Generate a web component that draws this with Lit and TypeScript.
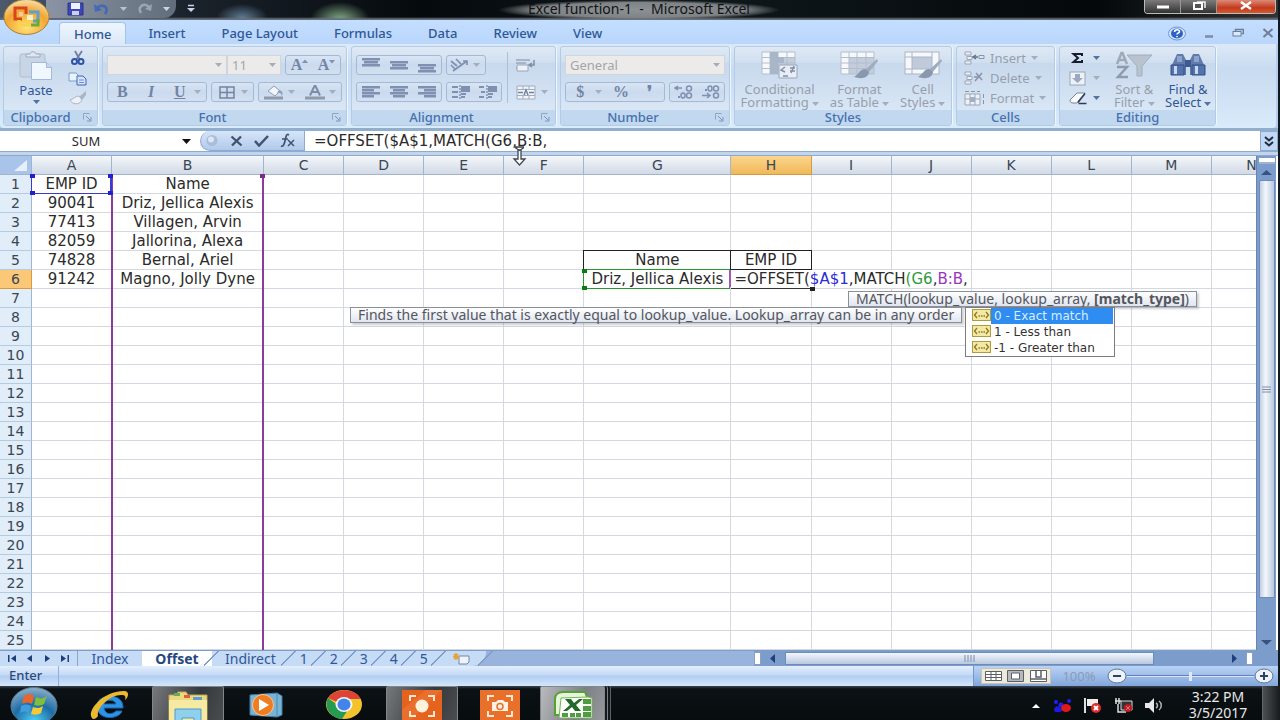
import { LitElement, html, svg, css, nothing } from "lit";
import { customElement } from "lit/decorators.js";
import { classMap } from "lit/directives/class-map.js";

const icon = (w: number, h: number, body: unknown, cls = "") =>
  html`<svg class=${cls} width=${w} height=${h} viewBox="0 0 ${w} ${h}" aria-hidden="true">${body}</svg>`;

const caret = (color = "#a3adbd") =>
  icon(7, 4, svg`<path d="M0 0h7L3.5 4z" fill=${color} />`, "caret");

const bars = (rows: number[][]) =>
  icon(18, 16, svg`${rows.map(([x, y, w]) => svg`<rect x=${x} y=${y} width=${w} height="2.500" fill="#8090b1"/>`)}`);

const COLS = ["A", "B", "C", "D", "E", "F", "G", "H", "I", "J", "K", "L", "M", "N"];
const WIDE: Record<string, string> = { B: "c-b", G: "c-g" };
const CELLS: Record<string, string> = {
  A1: "EMP ID", B1: "Name",
  A2: "90041", B2: "Driz, Jellica Alexis",
  A3: "77413", B3: "Villagen, Arvin",
  A4: "82059", B4: "Jallorina, Alexa",
  A5: "74828", B5: "Bernal, Ariel",
  A6: "91242", B6: "Magno, Jolly Dyne",
  G5: "Name", H5: "EMP ID", G6: "Driz, Jellica Alexis",
};

const launcher = icon(9, 9, svg`<path d="M.5 6.5v-6h6" fill="none" stroke="#8fa5c6"/><path d="M3 3l4 4M8 4v4H4" fill="none" stroke="#7b93b8"/>`, "launcher");

const gridIcon = (extra: unknown) => icon(38, 28, svg`
  <rect x="1" y="1" width="33" height="22" fill="#f6f8fb"/>
  <path d="M9 6.500h25V23H9z" fill="#c3cddc"/>
  <path d="M1 1h33v22H1zM9 1v22M17 1v22M26 1v22M1 6.500h33M1 12h33M1 17.500h33" fill="none" stroke="#b3becd"/>
  ${extra}`);

const brush = svg`<path d="M37 8L25 19l3 3L38 10z" fill="#9eacbf"/><path d="M25 18c-5 0-6 5-11 8 6 2 14 2 15-5z" fill="#8998ae"/>`;

@customElement("excel-ribbon")
class ExcelRibbon extends LitElement {
  static styles = css`
    :host { display: block; color: #3e6aaa; font: 13px/16px "Noto Sans", sans-serif; }
    button { font: inherit; color: inherit; background: none; border: 0; padding: 0; margin: 0; display: flex; align-items: center; justify-content: center; }
    svg { display: block; flex: none; }
    .tabs { display: flex; align-items: end; height: 24px; padding-left: 59px; padding-right: 4px; background: linear-gradient(#c3deff, #b9d6fb); }
    .tab { height: 22px; padding: 0 14px; color: #2f5796; font-weight: 500; }
    .tab + .tab { margin-left: 8px; }
    .tab.on { background: linear-gradient(#eef6ff, #dbe8f8); border: 1px solid #a5c3e8; border-bottom: 0; border-radius: 4px 4px 0 0; }
    .winctl { display: flex; align-items: center; margin-left: auto; height: 22px; gap: 18px; }
    .ribbon { display: flex; gap: 4px; padding: 2px 3px; height: 84px; box-sizing: border-box; margin-right: 2px; background: linear-gradient(#dce9f8, #c8dbf0 30%, #d3e4f6 75%, #d9ecfb); border-radius: 0 0 4px 4px; }
    .edge { height: 3px; background: #92aecd; }
    .group { display: flex; flex-direction: column; box-sizing: border-box; border: 1px solid #b3cbe6; border-radius: 3px; background: linear-gradient(#dfe9f5, #d0dff0 20%, #c8d9ed 21%, #d8e6f5 80%); box-shadow: 1px 0 0 #eef6ff; overflow: hidden; }
    .label { position: relative; height: 15px; line-height: 15px; text-align: center; background: #c1d8ef; color: #4670ae; font-weight: 500; }
    .label.has { padding-right: 24px; }
    .clip .label { padding-right: 20px; }
    .launcher { position: absolute; right: 5px; top: 3px; }
    .content { flex: 1; display: flex; min-height: 0; }
    .rows { display: flex; flex-direction: column; gap: 7px; padding: 8px 4px 0; flex: 1; }
    .row { display: flex; gap: 4px; height: 20px; }
    .box { display: flex; align-items: center; justify-content: space-around; box-sizing: border-box; height: 20px; border: 1px solid #a3bad6; border-radius: 3px; background: linear-gradient(#d9e5f4, #cbdaee 50%, #d2e0f1); color: #7284a4; }
    .box button { flex: 1; }
    .box .caret { margin-right: 5px; }
    .serif { font: bold 16px/18px "Liberation Serif", serif; color: #7284a4; }
    .combo { display: flex; align-items: center; box-sizing: border-box; height: 20px; border: 1px solid #cfd5de; background: #ecebea; padding-right: 4px; color: #a3a5a8; }
    .combo input, .combo select { appearance: none; flex: 1; min-width: 0; width: 10px; border: 0; background: none; color: #a3a5a8; font: inherit; padding: 0 4px; opacity: 1; }
    .w-name { width: 120px; } .w-size { width: 54px; margin-left: -4px; } .w-56 { width: 56px; } .w-100 { width: 100px; } .w-43 { width: 43px; } .w-84 { width: 84px; } .w-86 { width: 86px; } .w-40 { width: 40px; } .w-160 { width: 160px; }
    .clip { width: 95px; } .font { width: 245px; } .align { width: 205px; } .num { width: 170px; } .styles { width: 218px; } .cells { width: 99px; } .edit { width: 157px; }
    .paste { flex-direction: column; justify-content: start; width: 64px; padding-top: 4px; gap: 2px; color: #2f5796; }
    .stack { display: flex; flex-direction: column; justify-content: space-between; padding: 3px 0 5px; align-items: center; }
    .vline { width: 1px; background: #a9bfdb; margin: 5px 0 7px 1px; }
    .merge { padding: 8px 0 0 8px; display: flex; flex-direction: column; gap: 7px; width: 40px; }
    .merge button { height: 20px; justify-content: start; gap: 5px; }
    .big { flex-direction: column; justify-content: start; line-height: 13px; padding-top: 4px; gap: 4px; color: #979fac; }
    .big .txt { display: block; text-align: center; white-space: nowrap; }
    .big svg.caret { display: inline-block; vertical-align: middle; margin-left: 3px; }
    .big.live { color: #2f5796; }
    .bigs { justify-content: space-around; }
    .cellrow { gap: 5px; color: #979fac; height: 20px; justify-content: start; }
    .cellrows { display: flex; flex-direction: column; padding: 1px 0 0 7px; }
    .small { display: flex; flex-direction: column; padding: 1px 0 0 9px; width: 40px; }
    .small button { height: 20px; gap: 6px; justify-content: start; }
  `;

  render() {
    const g = "#8090b1";
    return html`
      <nav class="tabs">
        ${["Home", "Insert", "Page Layout", "Formulas", "Data", "Review", "View"].map(
          (t, i) => html`<button class=${classMap({ tab: true, on: i === 0 })}>${t}</button>`)}
        <div class="winctl">
          <button aria-label="Help">${icon(18, 15, svg`<ellipse cx="9" cy="7.500" rx="8.500" ry="6.500" fill="#d5e6fb" stroke="#6d95d8"/><ellipse cx="9" cy="7.500" rx="6" ry="5" fill="#2c62c6"/><path d="M6.500 6c0-3 5-3 5-.5C11.500 7 9 7 9 8.500M9 10v1.300" fill="none" stroke="#fff" stroke-width="1.600"/>`)}</button>
          <button aria-label="Minimize workbook">${icon(10, 12, svg`<path d="M1 9.500h8" stroke="#7c8da6" stroke-width="2.500"/>`)}</button>
          <button aria-label="Restore workbook">${icon(12, 12, svg`<path d="M3.500 4V2.500h8v4H9.500" fill="none" stroke="#6c7e98" stroke-width="1.500"/><rect x="1" y="4.500" width="8" height="4.500" fill="#dce9fb" stroke="#6c7e98"/>`)}</button>
          <button aria-label="Close workbook">${icon(12, 12, svg`<path d="M1.500 2l9 8M10.500 2l-9 8" stroke="#6f7d93" stroke-width="2"/>`)}</button>
        </div>
      </nav>
      <div class="ribbon">
        <section class="group clip">
          <div class="content">
            <button class="paste">
              ${icon(34, 29, svg`<rect x="1" y="3" width="25" height="23" rx="2" fill="#c9d4e4" stroke="#b0bdd0"/><path d="M7 6V3h4c0-3 6-3 6 0h4v3z" fill="#dfe6ef" stroke="#9dabc0"/><path d="M12.500 11.500h15l5 5v12h-20z" fill="#f1f7ff" stroke="#a2b9dd"/><path d="M27.500 11.500v5h5" fill="#c9daf3" stroke="#a2b9dd"/>`)}
              <span>Paste</span>${caret("#4d70a8")}
            </button>
            <div class="stack">
              <button aria-label="Cut">${icon(18, 16, svg`<path d="M6 1l5 9M13 1L7 10" stroke="#6c7fa2" stroke-width="1.800"/><circle cx="5.500" cy="11.500" r="2.500" fill="none" stroke="#2e54a8" stroke-width="2"/><circle cx="12" cy="11.500" r="2.500" fill="none" stroke="#2e54a8" stroke-width="2"/>`)}</button>
              <button aria-label="Copy">${icon(20, 14, svg`<path d="M1 1h7l2 2v6H1z" fill="#e9f2ff" stroke="#7b9bd0"/><path d="M9 4h6l3 3v6H9z" fill="#d4e3fb" stroke="#3e66b2"/><path d="M11 8h5M11 10.500h5" stroke="#6e93d2"/>`)}</button>
              <button aria-label="Format Painter">${icon(18, 14, svg`<path d="M17 0l-7 6 3 3 4-5z" fill="#a9b4c5"/><path d="M10 5c-4 0-5 3-9 4 2 4 9 6 12 0z" fill="#eef1f5" stroke="#a9b4c5"/>`)}</button>
            </div>
          </div>
          <div class="label has">Clipboard${launcher}</div>
        </section>
        <section class="group font">
          <div class="rows">
            <div class="row">
              <label class="combo w-name"><input aria-label="Font name" disabled />${caret()}</label>
              <label class="combo w-size"><input aria-label="Font size" value="11" disabled />${caret()}</label>
              <div class="box w-56">
                <button aria-label="Grow Font" class="serif">A${icon(6, 14, svg`<path d="M0 5l3-3.500L6 5z" fill=${g}/>`)}</button>
                <button aria-label="Shrink Font" class="serif">A${icon(6, 14, svg`<path d="M0 2h6L3 5.500z" fill=${g}/>`)}</button>
              </div>
            </div>
            <div class="row">
              <div class="box w-100"><button class="serif">B</button><button class="serif"><i>I</i></button><button class="serif"><u>U</u></button>${caret()}</div>
              <div class="box w-43"><button aria-label="Borders">${icon(16, 13, svg`<path d="M1 1h14v11H1zM8 1v11M1 6.500h14" fill="none" stroke="#74849f" stroke-width="1.500"/>`)}</button>${caret()}</div>
              <div class="box w-84">
                <button aria-label="Fill Color">${icon(20, 15, svg`<path d="M4 6l6-5 6 5-5 5z" fill="#f2f5f9" stroke="#8f9db5"/><path d="M15 5c4 1 4 3 3 6-1-3-2-4-5-3z" fill="#8f9db5"/><path d="M0 11.500h19v3H0z" fill="#909aa9"/>`)}</button>${caret()}
                <button aria-label="Font Color">${icon(20, 15, svg`<path d="M5 10.500L9.500 1h1L15 10.500M7 7h6.500" fill="none" stroke="#7d8ca8" stroke-width="2"/><path d="M0 11.500h20v3H0z" fill="#909aa9"/>`)}</button>${caret()}
              </div>
            </div>
          </div>
          <div class="label has">Font${launcher}</div>
        </section>
        <section class="group align">
          <div class="content">
            <div class="rows">
              <div class="row">
                <div class="box w-86">
                  <button aria-label="Top Align">${bars([[0, 1, 18], [2, 4, 14], [0, 7, 18]])}</button>
                  <button aria-label="Middle Align">${bars([[0, 4, 18], [2, 7, 14], [0, 10, 18]])}</button>
                  <button aria-label="Bottom Align">${bars([[0, 7, 18], [2, 10, 14], [0, 13, 18]])}</button>
                </div>
                <div class="box w-40"><button aria-label="Orientation">${icon(20, 16, svg`<path d="M1 4l6 5M1 8l4 4M6 2l5 5M3 14L17 4M13 4h4v4" fill="none" stroke=${g} stroke-width="1.700"/>`)}</button>${caret()}</div>
              </div>
              <div class="row">
                <div class="box w-86">
                  <button aria-label="Align Left">${bars([[0, 2, 18], [0, 5, 12], [0, 8, 18], [0, 11, 12]])}</button>
                  <button aria-label="Center">${bars([[0, 2, 18], [3, 5, 12], [0, 8, 18], [3, 11, 12]])}</button>
                  <button aria-label="Align Right">${bars([[0, 2, 18], [6, 5, 12], [0, 8, 18], [6, 11, 12]])}</button>
                </div>
                <div class="box w-56">
                  <button aria-label="Decrease Indent">${icon(18, 16, svg`<path d="M0 3h6M0 8h6M0 13h6" stroke=${g} stroke-width="2"/><path d="M9 2h9v6H9zM9 9h5v2H9zM9 12h4v2H9z" fill=${g}/><path d="M8 1v14" stroke="#5f7194" stroke-dasharray="2 1"/>`)}</button>
                  <button aria-label="Increase Indent">${icon(18, 16, svg`<path d="M0 3h5M2 8h4M0 13h5" stroke=${g} stroke-width="2"/><path d="M9 2h9v6H9zM9 9h5v2H9zM9 12h4v2H9z" fill=${g}/><path d="M8 1v14" stroke="#5f7194" stroke-dasharray="2 1"/>`)}</button>
                </div>
              </div>
            </div>
            <div class="vline"></div>
            <div class="merge">
              <button aria-label="Wrap Text">${icon(20, 15, svg`<path d="M0 2h14M0 5h10M0 10h8" stroke="#9aa6ba" stroke-width="1.500"/><path d="M1 7h11v6H1z" fill="#eef2f7" stroke="#9aa6ba"/><path d="M18 2v5h-4M16 5l-3 2 3 2" fill="none" stroke="#7f8da5" stroke-width="1.500"/>`)}</button>
              <button aria-label="Merge and Center">${icon(20, 15, svg`<path d="M1 1h18v13H1zM1 4.500h18M1 10.500h18M7 1v3M13 1v3M7 11v3M13 11v3" fill="#f0f3f8" stroke="#a0acbf"/><path d="M2 7.500h5M18 7.500h-5M8 10l2-5 2 5" fill="none" stroke="#74849f" stroke-width="1.500"/>`)}${caret()}</button>
            </div>
          </div>
          <div class="label has">Alignment${launcher}</div>
        </section>
        <section class="group num">
          <div class="rows">
            <div class="row"><label class="combo w-160"><select aria-label="Number Format" disabled><option>General</option></select>${caret()}</label></div>
            <div class="row">
              <div class="box w-100"><button class="serif">$</button>${caret()}<button class="serif">%</button><button class="serif">❜</button></div>
              <div class="box w-56">
                <button aria-label="Increase Decimal">${icon(20, 14, svg`<path d="M8 3H1M4 1L1 3l3 2" fill="none" stroke=${g} stroke-width="1.500"/><g fill="none" stroke=${g} stroke-width="1.500"><ellipse cx="15" cy="3.500" rx="2.500" ry="2.500"/><ellipse cx="9" cy="10.500" rx="2" ry="2.500"/><ellipse cx="15" cy="10.500" rx="2.500" ry="2.500"/></g><path d="M4 11h2v2H4z" fill=${g}/>`)}</button>
                <button aria-label="Decrease Decimal">${icon(20, 14, svg`<path d="M1 10.500h8M6 8l3 2.500L6 13" fill="none" stroke=${g} stroke-width="1.500"/><g fill="none" stroke=${g} stroke-width="1.500"><ellipse cx="9" cy="3.500" rx="2" ry="2.500"/><ellipse cx="15" cy="3.500" rx="2.500" ry="2.500"/><ellipse cx="15" cy="10.500" rx="2.500" ry="2.500"/></g><path d="M4 4h2v2H4z" fill=${g}/>`)}</button>
              </div>
            </div>
          </div>
          <div class="label has">Number${launcher}</div>
        </section>
        <section class="group styles">
          <div class="content bigs">
            <button class="big">${gridIcon(svg`<path d="M9 1h8v22H9zM17 6h6v6h-6z" fill="#a9b5c9"/><path d="M18 14h18v13H18z" fill="#e9eef5" stroke="#9aa7bb"/><path d="M24 16l-4 3 4 2M27 25h-5M29 17h5M29 20h5M33 15l-3 7" fill="none" stroke="#8090a8" stroke-width="1.500"/>`)}<span class="txt">Conditional<br />Formatting${caret()}</span></button>
            <button class="big">${gridIcon(brush)}<span class="txt">Format<br />as Table${caret()}</span></button>
            <button class="big">${icon(38, 28, svg`<rect x="1" y="1" width="34" height="22" fill="#f6f8fb" stroke="#aab6c8"/><path d="M8 6h20v12H8z" fill="#bfcadb" stroke="#aab6c8"/><path d="M8 1v5M28 1v5M1 6h7M1 18h7M8 18v5" stroke="#aab6c8"/>${brush}`)}<span class="txt">Cell<br />Styles${caret()}</span></button>
          </div>
          <div class="label">Styles</div>
        </section>
        <section class="group cells">
          <div class="content cellrows">
            <button class="cellrow">${icon(21, 14, svg`<path d="M1 1h6v3H1zM1 10h6v3H1zM3 5.500h5v3H3z" fill="#eef2f7" stroke="#9aa6ba"/><path d="M10 6h4M12 4l-3 2 3 2" fill="none" stroke="#66758f" stroke-width="1.500"/><path d="M15 4.500h5v3h-5z" fill="#dfe6ef" stroke="#8794ab"/>`)}Insert ${caret()}</button>
            <button class="cellrow">${icon(21, 14, svg`<path d="M1 1h6v3H1zM1 10h6v3H1zM3 5.500h5v3H3z" fill="#eef2f7" stroke="#9aa6ba"/><path d="M10 6h5M11 10l7-8M12 2l6 7" fill="none" stroke="#8794ab" stroke-width="1.500"/>`)}Delete ${caret()}</button>
            <button class="cellrow">${icon(21, 15, svg`<path d="M1 3h15v11H1zM6 3v11M11 3v11M1 8h15" fill="#eef2f7" stroke="#9aa6ba"/><path d="M1 .5h15M19.500 3v11" stroke="#8794ab" stroke-dasharray="4 2"/><path d="M6 6h5v5H6z" fill="#a3b0c4"/>`)}Format ${caret()}</button>
          </div>
          <div class="label">Cells</div>
        </section>
        <section class="group edit">
          <div class="content">
            <div class="small">
              <button aria-label="Sum">${icon(18, 14, svg`<path d="M13 5V3H4.500L9 7l-4.500 4H13V9" fill="none" stroke="#151d2e" stroke-width="2"/>`)}${caret("#5672a0")}</button>
              <button aria-label="Fill">${icon(18, 15, svg`<rect x="1" y="1" width="15" height="13" fill="#eef2f7" stroke="#9aa6ba"/><path d="M6 3h5v4h3l-5.500 5L3 7h3z" fill="#9ba8bd"/>`)}${caret()}</button>
              <button aria-label="Clear">${icon(18, 14, svg`<path d="M1 9l7-7h8l-6 7-2 3H4c-2 0-3-1-3-3z" fill="#fbfcff" stroke="#74859f"/><path d="M9.500 12.500h8" stroke="#2e3c58" stroke-width="1.500"/><path d="M9 11.500l7-9" stroke="#2e3c58" stroke-width="1.500"/>`)}${caret("#5672a0")}</button>
            </div>
            <button class="big w-56">${icon(38, 28, svg`<path d="M12 4h25L27 15v10h-5V15z" fill="#b9c3d0" stroke="#a2adbd"/><path d="M2 13L6.500 2h1L12 13M4 9h6" fill="none" stroke="#a1a9b7" stroke-width="2.500"/><path d="M2 16h10L3 26h10" fill="none" stroke="#8f9aae" stroke-width="2.500"/>`)}<span class="txt">Sort &amp;<br />Filter${caret()}</span></button>
            <button class="big live w-56">${icon(38, 28, svg`<path d="M8 3h6l3 6v15H3V14z" fill="#617bab"/><path d="M30 3h-6l-3 6v15h14V14z" fill="#617bab"/><path d="M16 9h6v7h-6z" fill="#3d5a92"/><path d="M2 14h13v10H2zM23 14h13v10H23z" fill="#5472ab" stroke="#334f86"/><path d="M5 15h3v8H5zM26 15h3v8h-3z" fill="#c9d8f2"/><path d="M8 5h5v6H8zM25 5h5v6h-5z" fill="#8ba3cd"/>`)}<span class="txt">Find &amp;<br />Select${caret("#5672a0")}</span></button>
          </div>
          <div class="label">Editing</div>
        </section>
      </div>
      <div class="edge"></div>
    `;
  }
}

@customElement("excel-sheet")
class ExcelSheet extends LitElement {
  static styles = css`
    :host { display: flex; min-height: 0; position: relative; background: #fff; font: 15px/18px "DejaVu Sans", sans-serif; color: #2b2b2b; }
    .view { flex: 1; min-width: 0; overflow: hidden; position: relative; }
    table { table-layout: fixed; border-collapse: separate; border-spacing: 0; width: 1292px; }
    col.c { width: 80px; } col.c-b { width: 152px; } col.c-g { width: 147px; } col.rh { width: 32px; }
    th, td { height: 19px; box-sizing: border-box; padding: 0; border-right: 1px solid #d3d8e2; border-bottom: 1px solid #d3d8e2; text-align: center; white-space: nowrap; position: relative; font-weight: normal; }
    td { line-height: 18px; }
    th { font-size: 14px; line-height: 16px; color: #3a4654; border-color: #9eb6ce; background: linear-gradient(#f5f8fc, #dfe5ee 60%, #d3dae6); }
    tbody th { background: #e1edf8; border-bottom-color: #b5cbe0; }
    th.hot { background: linear-gradient(#fbd58c, #f0b95a); border-color: #d99a3c; }
    tbody th.hot { background: #fbc878; }
    th.corner { background: #a9c4e9; }
    .tri { position: absolute; right: 4px; bottom: 3px; }
    .frame { position: absolute; inset: -1px -1px -1px -1px; border: 1px solid #222; z-index: 1; }
    .blue { position: absolute; inset: 0 -1px -1px -1px; border: 2px solid #3a3ad0; border-top: 0; border-left-width: 1px; border-bottom-width: 1px; z-index: 2; }
    .green { position: absolute; inset: -1px 0 -1px -1px; border: 1px solid #2c9432; z-index: 2; }
    .k { position: absolute; width: 5px; height: 4px; background: currentColor; }
    .blue { color: #2020d0; } .green { color: #087d10; }
    .tl { left: -2px; top: -1px; } .tr { right: -3px; top: -1px; } .bl { left: -2px; bottom: -2px; } .br { right: -3px; bottom: -2px; }
    .purple { position: absolute; top: 0; left: -1px; right: -1px; height: 476px; border: 2px solid #8c3a9c; border-width: 0 2px; color: #7c2a8c; z-index: 1; }
    .under { position: absolute; inset: auto -1px -1px 0; height: 1px; background: #333; z-index: 4; color: #222; }
    .edit { position: absolute; left: 0; top: 0; height: 18px; padding-left: 3px; background: #fff; z-index: 3; text-align: left; }
    .edit::before { content: ""; position: absolute; left: -2px; top: 0; height: 17px; width: 2px; background: #a25bb0; }
    .r { color: #2c2cd8; } .g { color: #2e9a3a; } .p { color: #9a35c0; }
    .tip { position: absolute; z-index: 4; box-sizing: border-box; height: 16px; padding: 0 7px; font: 14px/14px "Noto Sans", sans-serif; color: #54565c; white-space: nowrap; border: 1px solid #8b8f98; background: linear-gradient(#fff, #dfe5f1); box-shadow: 2px 2px 2px #8886; }
    .sig { left: 848px; top: 135px; }
    .desc { left: 350px; top: 151px; }
    .list { position: absolute; z-index: 5; left: 965px; top: 151px; width: 150px; box-sizing: border-box; margin: 0; padding: 0 1px; list-style: none; background: #fff; border: 1px solid #7b7d82; font: 12px/16px "DejaVu Sans", sans-serif; color: #333; }
    .list li { display: flex; height: 16px; padding-left: 5px; }
    .list span { flex: 1; padding-left: 3px; }
    .list svg { flex: none; margin-top: 1px; }
    .list .sel span { background: #2f8cf0; color: #d8edff; }
    .vbar { width: 20px; display: flex; flex-direction: column; align-items: center; margin-right: 2px; background: #7c9dcc; border-left: 1px solid #6585b5; box-sizing: border-box; }
    .split { width: 16px; height: 4px; margin-top: 2px; background: #fff; border-bottom: 2px solid #9fb4d2; }
    .up, .down { border: 0; background: none; padding: 0; height: 16px; display: flex; align-items: center; }
    .thumb { width: 14px; flex: 418; background: linear-gradient(90deg, #c3cfe2, #f3f7fc 40%, #b9c8df); border: 1px solid #6e8cb9; display: flex; align-items: center; justify-content: center; border-radius: 1px; }
    .track { flex: 36; }
  `;

  private overlay(id: string) {
    const knobs = (...k: string[]) => k.map((c) => html`<i class="k ${c}"></i>`);
    if (id === "A1") return html`<div class="blue">${knobs("tl", "tr", "bl", "br")}</div>`;
    if (id === "B1") return html`<div class="purple">${knobs("tr")}</div>`;
    if (id === "G5" || id === "H5") return html`<div class="frame"></div>`;
    if (id === "G6") return html`<div class="green">${knobs("tl", "bl")}</div>`;
    if (id === "H6")
      return html`<div class="edit">=OFFSET(<span class="r">$A$1</span>,MATCH<span class="g">(G6</span>,<span class="p">B:B</span>,</div><div class="under">${knobs("br")}</div>`;
    return nothing;
  }

  render() {
    const rows = Array.from({ length: 25 }, (_, i) => i + 1);
    const fx = icon(19, 12, svg`<rect x=".5" y=".5" width="18" height="11" fill="#f3e9a4" stroke="#b09a3c"/><path d="M5 3L2.500 6 5 9M14 3l2.500 3L14 9" fill="none" stroke="#8d7a24" stroke-width="1.300"/><path d="M6.500 7h1.500M9 7h1.500M11.500 7H13" stroke="#8d7a24" stroke-width="1.500"/>`);
    return html`
      <div class="view">
        <table>
          <colgroup><col class="rh" />${COLS.map((c) => html`<col class=${WIDE[c] ?? "c"} />`)}</colgroup>
          <thead><tr>
            <th class="corner">${icon(13, 11, svg`<path d="M13 0v11H0z" fill="#e6effb"/>`, "tri")}</th>
            ${COLS.map((c) => html`<th class=${c === "H" ? "hot" : ""}>${c}</th>`)}
          </tr></thead>
          <tbody>
            ${rows.map((r) => html`<tr>
              <th class=${r === 6 ? "hot" : ""}>${r}</th>
              ${COLS.map((c) => html`<td>${CELLS[c + r] ?? nothing}${this.overlay(c + r)}</td>`)}
            </tr>`)}
          </tbody>
        </table>
        <div class="tip sig">MATCH(lookup_value, lookup_array, <b>[match_type]</b>)</div>
        <div class="tip desc">Finds the first value that is exactly equal to lookup_value. Lookup_array can be in any order</div>
        <ul class="list" role="listbox">
          <li class="sel" role="option">${fx}<span>0 - Exact match</span></li>
          <li role="option">${fx}<span>1 - Less than</span></li>
          <li role="option">${fx}<span>-1 - Greater than</span></li>
        </ul>
      </div>
      <div class="vbar">
        <div class="split"></div>
        <button class="up" aria-label="Scroll up">${icon(11, 5, svg`<path d="M0 5l5.500-5L11 5z" fill="#37527f"/>`)}</button>
        <div class="thumb">${icon(9, 7, svg`<path d="M0 1h9M0 3.500h9M0 6h9" stroke="#7f8ea8"/>`)}</div>
        <div class="track"></div>
        <button class="down" aria-label="Scroll down">${icon(11, 5, svg`<path d="M0 0h11L5.500 5z" fill="#37527f"/>`)}</button>
      </div>
    `;
  }
}

@customElement("win-taskbar")
class WinTaskbar extends LitElement {
  static styles = css`
    :host { display: flex; height: 34px; overflow: hidden; background: linear-gradient(#3a4450, #0b1114 3px, #070c0f); color: #e8e8e8; font: 14px/16px "Noto Sans", sans-serif; }
    button { border: 0; background: none; padding: 0; display: flex; justify-content: center; align-items: start; padding-top: 4px; box-sizing: border-box; height: 34px; }
    svg { display: block; flex: none; }
    .start { width: 74px; padding-top: 1px; padding-right: 6px; }
    .app { width: 72px; margin-right: 6px; }
    .on { background: linear-gradient(110deg, #76797c, #34393d 60%, #4a4d50); border: 1px solid #82868a; border-bottom: 0; border-radius: 2px 2px 0 0; padding-top: 3px; }
    .excel { width: 65px; margin-left: -2px; background: linear-gradient(110deg, #b9bbbe, #7c7f84 60%, #96999d); box-shadow: 2px 0 #15191c, 3px 0 #7d8185, 5px 0 #15191c, 6px 0 #5d6165; }
    .tray { display: flex; margin-left: auto; align-items: start; padding-top: 11px; gap: 11px; }
    .clock { margin: -8px 2px 0 12px; text-align: center; width: 62px; white-space: nowrap; }
    .desk { width: 17px; margin-top: -11px; background: linear-gradient(90deg, #4b4f52, #171b1d); height: 34px; border-left: 1px solid #666; }
  `;
  render() {
    const corners = svg`<path d="M8 11V6h6M26 6h6v5M32 21v5h-6M14 26H8v-5" fill="none" stroke="#ffe6d0" stroke-width="2"/>`;
    return html`
      <button class="start" aria-label="Start">${icon(48, 40, svg`
        <defs><radialGradient id="orb" cx=".5" cy=".9" r=".9"><stop offset="0" stop-color="#4fd0f5"/><stop offset=".5" stop-color="#1d6ca6"/><stop offset="1" stop-color="#8fb0c8"/></radialGradient></defs>
        <ellipse cx="24" cy="19" rx="23" ry="18.500" fill="url(#orb)" stroke="#5a7d95"/>
        <path d="M14 9c4-3 7-2 10 0l-2 8c-3-2-6-2-10 0z" fill="#e8662c"/><path d="M26 10c4 2 7 2 11-1l-3 8c-3 2-6 2-10 1z" fill="#7fbf3c"/><path d="M11 19c4-2 7-2 10 0l-2 7c-3-2-6-2-9 0z" fill="#3f9de0"/><path d="M23 20c4 2 7 1 10-1l-2 7c-3 2-6 2-10 1z" fill="#f8c932"/>`)}</button>
      <button class="app" aria-label="Internet Explorer">${icon(42, 32, svg`
        <path d="M34 18H15c1 7 8 7 12 3h6c-3 9-25 10-25-5C8 3 35 2 34 18zM15 14h12c-1-5-11-5-12 0z" fill="#2b94e6" stroke="#1a66b4"/>
        <path d="M3 28C-3 21 15 0 36 1c5 1 3 7 0 9 1-4 0-5-4-5C20 5 7 19 9 26c-2 3-5 4-6 2z" fill="#ecb92c"/>`)}</button>
      <button class="app on" aria-label="Windows Explorer">${icon(44, 34, svg`
        <path d="M3 5h7l2-3h8l2 3h19v28H3z" fill="#ecd97f" stroke="#c1a84a"/><path d="M8 3h6v3H8z" fill="#5fae62"/><path d="M18 5h6v3h-6z" fill="#e05e43"/><path d="M27 7h9v3h-9z" fill="#5a9fd2"/><path d="M3 10h38v22H3z" fill="#f6e9a2"/><path d="M9 34V19h26v15h-7v-6H16v6z" fill="#8ed0ee" stroke="#4c9cc8"/>`)}</button>
      <button class="app" aria-label="Media Player">${icon(36, 30, svg`
        <path d="M2 5l27-2 5 3v19l-5 2-27-2z" fill="#79b4d6" stroke="#3d7ea6"/><path d="M29 3v24" stroke="#4a8bb5"/><circle cx="15" cy="15" r="10.500" fill="#ee7c22" stroke="#ffc48c"/><path d="M11 9l10 6-10 6z" fill="#fff"/>`)}</button>
      <button class="app" aria-label="Chrome">${icon(38, 30, svg`
        <ellipse cx="19" cy="14.500" rx="18" ry="14.500" fill="#f3c32c"/><path d="M19 15L3 8C10-3 32-2 35.500 9H19z" fill="#dd4437"/><path d="M3 8C-2 18 6 28 17 29l7-11-9-1z" fill="#249a52"/><ellipse cx="19" cy="14.500" rx="8.500" ry="7.500" fill="#f4f4f4"/><ellipse cx="19" cy="14.500" rx="6.500" ry="6" fill="#4285ea"/>`)}</button>
      <button class="app on" aria-label="Screen Recorder">${icon(40, 31, svg`<rect width="40" height="34" fill="#e5631e"/><path d="M0 20L24 0h16L4 34H0z" fill="#ee7836" opacity=".6"/>${corners}<circle cx="20" cy="16" r="6.500" fill="#fff2dc"/>`)}</button>
      <button class="app" aria-label="Screenshot">${icon(40, 30, svg`<rect width="40" height="34" fill="#e8702a"/>${corners}<path d="M12 12h4l2-2h5l2 2h3v9H12z" fill="#fff2e4"/><circle cx="20" cy="16.500" r="3" fill="none" stroke="#e8702a" stroke-width="1.500"/>`)}</button>
      <button class="app on excel" aria-label="Excel">${icon(42, 32, svg`
        <path d="M3 25V9c0-4 3-7 8-7h22l2 5v18z" fill="#e6f4da" stroke="#55a136" stroke-width="2"/><path d="M9 8l27-1 4 1v20H7z" fill="#fdfffb" stroke="#76b25a"/><path d="M13 9h6l3 4 5-4h4l-7 6 5 6h-6l-3-4-5 4h-4l7-6z" fill="#24692b"/><path d="M31 9h8v5h-8zM31 16h8v5h-8zM31 22h8v5h-8zM10 23h6v4h-6zM18 23h5v4h-5zM24 23h5v4h-5z" fill="#4f9c43"/>`)}</button>
      <div class="tray">
        ${icon(10, 18, svg`<path d="M1 11l4-4 4 4z" fill="#fff"/>`)}
        ${icon(20, 18, svg`<path d="M2 13c1-5 5-5 8 0 0 3-8 3-8 0z" fill="#1c1ce8"/><circle cx="4" cy="5" r="2" fill="#2020ff"/><circle cx="17" cy="4" r="2" fill="#2020ff"/><circle cx="9" cy="8" r="2.500" fill="#2020ff"/><ellipse cx="14" cy="11" rx="5" ry="4" fill="#e01818"/>`)}
        ${icon(20, 18, svg`<path d="M2 1v15" stroke="#ddd" stroke-width="2"/><path d="M4 2h11v7H4z" fill="#eee"/><circle cx="13" cy="11" r="5" fill="#e02c2c"/><path d="M11 9l4 4M15 9l-4 4" stroke="#fff" stroke-width="1.800"/>`)}
        ${icon(19, 18, svg`<path d="M2 1v6M5 1v6M1 4h6M4 7v8h8" fill="none" stroke="#ddd" stroke-width="1.500"/><path d="M7 4h11v9H7z" fill="#333" stroke="#ddd"/><circle cx="14" cy="11" r="4" fill="#b81c24"/><path d="M12 9l4 4M16 9l-4 4" stroke="#ed7070"/>`)}
        ${icon(20, 18, svg`<path d="M1 6h4l5-5v15l-5-5H1z" fill="#e8e8e8"/><path d="M12 6c2 1 2 4 0 5M15 4c3 2 3 7 0 9" fill="none" stroke="#b5b5b5" stroke-width="1.500"/>`)}
        <div class="clock">3:22 PM<br />3/5/2017</div>
        <div class="desk"></div>
      </div>
    `;
  }
}

@customElement("app-root")
class AppRoot extends LitElement {
  static styles = css`
    :host { display: block; height: 100vh; overflow: hidden; font: 13px/16px "Noto Sans", sans-serif; }
    .screen { display: flex; flex-direction: column; height: 100%; }
    button { border: 0; background: none; padding: 0; margin: 0; font: inherit; color: inherit; display: flex; align-items: center; justify-content: center; }
    svg { display: block; flex: none; }
    .window { flex: 1; min-height: 0; display: flex; flex-direction: column; position: relative; background: #b4cdee; border-right: 2px solid #101820; }
    .title { display: flex; height: 20px; justify-content: center; position: relative; background: linear-gradient(transparent 17px, #66707a 19px), radial-gradient(ellipse 26px 14px at 242px 18px, #5f7c94, transparent), radial-gradient(ellipse 30px 18px at 340px 20px, #86b088, transparent), linear-gradient(90deg, #4c5a6c, #1b232c 180px, #050a0d 420px, #10181c 700px, #04080a 1100px, #333); }
    .caption { font-size: 14px; line-height: 18px; color: #101214; background: radial-gradient(closest-side, #8d9194, #7f8386 75%, transparent); padding: 0 30px; }
    .quick { position: absolute; left: 46px; top: 0; height: 18px; width: 130px; display: flex; align-items: center; gap: 10px; padding-left: 21px; box-sizing: border-box; background: linear-gradient(90deg, #8a94a4, #626d7c); border-radius: 0 0 12px 0; }
    .more { position: absolute; left: 187px; top: 4px; }
    .orb { position: absolute; left: 2px; top: -3px; z-index: 6; }
    .caps { position: absolute; right: 2px; top: 0; height: 13px; display: flex; border: 1px solid #b9bcbe; border-top: 0; border-radius: 0 0 4px 4px; overflow: hidden; }
    .caps button { width: 36px; background: linear-gradient(#7b7b7b, #333); border-right: 1px solid #999; }
    .caps .x { width: 58px; background: linear-gradient(#dc8a76, #c43a1c 60%, #d4582e); border: 0; }
    .fbar { display: flex; height: 20px; background: #fff; border-bottom: 1px solid #8fabd0; }
    .name { display: flex; align-items: center; width: 200px; padding-right: 9px; box-sizing: border-box; }
    input { border: 0; background: none; padding: 0; margin: 0; min-width: 0; color: #2b2b2b; }
    .name input { flex: 1; width: 10px; text-align: center; font: 13px/16px "Noto Sans", sans-serif; padding-right: 10px; }
    .fx { display: flex; align-items: center; width: 105px; box-sizing: border-box; border: 1px solid #8daacf; border-top: 0; border-radius: 10px 0 0 10px; background: linear-gradient(#d5e5f9, #b2caea); gap: 11px; padding-left: 5px; }
    .formula { flex: 1; padding-left: 9px; font: 15px/18px "DejaVu Sans", sans-serif; }
    .expand { width: 18px; background: #c3d8f4; border: 1px solid #8daacf; }
    .gap { height: 3px; background: #c2d5ec; border-bottom: 1px solid #8ea9c9; }
    excel-sheet { flex: 1; }
    .cursor { position: absolute; left: 512px; top: 146px; z-index: 7; }
    .sheets { display: flex; height: 16px; background: #98b4dc; border-top: 1px solid #7f9dc8; box-sizing: border-box; }
    .nav { display: flex; align-items: center; justify-content: space-between; width: 78px; box-sizing: border-box; padding: 0 7px; background: #c6dbf6; border-right: 1px solid #8aa6cf; }
    .sheet { position: relative; padding: 0 13px; min-width: 30px; box-sizing: border-box; background: #c6dbf6; color: #2f5796; line-height: 14px; font-size: 14px; }
    .sheet.num { padding: 0; width: 30px; }
    .sheet::after { content: ""; position: absolute; right: -7px; top: 0; width: 15px; height: 15px; background: linear-gradient(135deg, transparent 45%, #7e9ccc 46%, #7e9ccc 52%, transparent 53%); z-index: 1; }
    .sheet.sel { background: #fff; font-weight: bold; color: #24487f; padding: 0; width: 70px; }
    .sheet.first { width: 64px; padding: 0; }
    .sheet.first::after { display: none; }
    .sheet.new { width: 47px; border-radius: 0 0 14px 0; }
    .hbar { display: flex; align-items: center; margin-left: auto; width: 41%; background: #7c9dcc; }
    .hsplit { width: 5px; height: 11px; background: #fff; border: 1px solid #8aa0c0; }
    .harr { width: 24px; }
    .hthumb { flex: 370; height: 13px; display: flex; align-items: center; justify-content: center; background: linear-gradient(#f3f7fc, #b9c8df); border: 1px solid #6e8cb9; box-sizing: border-box; }
    .htrack { flex: 69; }
    .status { display: flex; height: 20px; background: linear-gradient(#e3effd, #c3d9f6 45%, #b1cdf1 50%, #d3e6fc); color: #2c4b7c; }
    .mode { width: 59px; padding-left: 9px; box-sizing: border-box; line-height: 19px; font-weight: 500; border-right: 1px solid #92afd6; }
    .tools { margin-left: auto; display: flex; align-items: center; background: linear-gradient(#b9d3f5, #82a6dc); border-left: 1px solid #7896c4; padding: 0 4px 0 7px; }
    .views { display: flex; background: #eee9dd; height: 16px; align-items: center; justify-content: space-around; width: 70px; border: 1px solid #c9c4b5; box-sizing: border-box; }
    .zoom { width: 56px; text-align: center; color: #8a9bb5; }
    .slider { width: 127px; margin: 0; height: 14px; appearance: none; background: linear-gradient(transparent 6px, #6482b4 6px, #6482b4 7px, #d6e5fa 7px, #d6e5fa 8px, transparent 8px); }
    .slider::-webkit-slider-thumb { appearance: none; width: 3px; height: 9px; background: #dfeafa; border: 0; }
  `;

  render() {
    const arrow = (d: string) => icon(10, 9, svg`<path d=${d} fill="#1f3f7c"/>`);
    const round = (d: string) => icon(20, 16, svg`<ellipse cx="10" cy="8" rx="9" ry="7" fill="#edf3fb" stroke="#5f7394"/><path d=${d} stroke="#2c4266" stroke-width="2"/>`);
    return html`
      <div class="screen">
        <div class="window">
          <header class="title">
            <div class="quick">
              <button aria-label="Save">${icon(17, 14, svg`<path d="M1 1h15v12H1z" fill="#3f46b8" stroke="#2c3190"/><path d="M4 1h9v6H4z" fill="#eef3ff"/><path d="M5 9h7v4H5z" fill="#c9d0ee"/>`)}</button>
              <button aria-label="Undo">${icon(16, 14, svg`<path d="M3 6c5-5 13-1 8 6" fill="none" stroke="#4568b8" stroke-width="2.800"/><path d="M0 2l1 8 7-2z" fill="#4568b8"/>`)}</button>
              ${caret("#b9c2cf")}
              <button aria-label="Redo">${icon(16, 14, svg`<path d="M12 5C7 0 0 5 4 11" fill="none" stroke="#9ba5b2" stroke-width="2.500"/><path d="M15 2l-1 7-6-2z" fill="#9ba5b2"/>`)}</button>
              ${caret("#d0d6df")}
            </div>
            <button class="more" aria-label="Customize">${icon(8, 8, svg`<path d="M1 1.500h6" stroke="#c6d5ea" stroke-width="1.500"/><path d="M0 4h8L4 8z" fill="#c6d5ea"/>`)}</button>
            <div class="caption">Excel function-1&nbsp; -&nbsp; Microsoft Excel</div>
            <div class="caps">
              <button aria-label="Minimize">${icon(14, 12, svg`<path d="M1 6h12" stroke="#fff" stroke-width="3"/>`)}</button>
              <button aria-label="Restore">${icon(14, 12, svg`<path d="M5 1h8v6" fill="none" stroke="#eee" stroke-width="1.500"/><rect x="2" y="2" width="8" height="6" fill="#555" stroke="#fff" stroke-width="2"/>`)}</button>
              <button class="x" aria-label="Close">${icon(14, 12, svg`<path d="M2 1l10 7M12 1L2 8" stroke="#fff" stroke-width="2.500"/>`)}</button>
            </div>
            <button class="orb" aria-label="Office Button">${icon(50, 40, svg`
              <defs><radialGradient id="ob" cx=".5" cy=".8" r=".8"><stop offset="0" stop-color="#ffe27a"/><stop offset=".6" stop-color="#f1a630"/><stop offset="1" stop-color="#f7e0b0"/></radialGradient></defs>
              <ellipse cx="24.500" cy="20" rx="22.500" ry="17.500" fill="url(#ob)" stroke="#a9803a"/>
              <g fill="none" stroke-width="3"><path d="M20 22h-7V11h11v6" stroke="#d9441c"/><path d="M27 15h9v9h-5" stroke="#5d9fd0"/><path d="M17 23v5h9v-5" stroke="#fbd24a"/><path d="M29 28h7v-6" stroke="#6ea838"/></g>
              <path d="M17 15h4v4h-4z" fill="#f6c9a0"/><path d="M25 18h6v5h-6z" fill="#fdf0c4"/>`)}</button>
          </header>
          <excel-ribbon></excel-ribbon>
          <div class="fbar">
            <label class="name"><input aria-label="Name Box" value="SUM" />${icon(9, 5, svg`<path d="M0 0h9L4.500 5z" fill="#111"/>`)}</label>
            <div class="fx">
              ${icon(13, 13, svg`<circle cx="6" cy="6.500" r="5.500" fill="#a9bcd8"/><circle cx="5" cy="5.500" r="3" fill="#dbe7f6"/>`)}
              <button aria-label="Cancel">${icon(13, 12, svg`<path d="M1.500 1.500l10 9M11 1.500L2 10.500" stroke="#40526f" stroke-width="2.300"/>`)}</button>
              <button aria-label="Enter">${icon(15, 12, svg`<path d="M1 6l4 4.500L14 1" fill="none" stroke="#40526f" stroke-width="2.500"/>`)}</button>
              <button aria-label="Insert Function">${icon(16, 15, svg`<path d="M9 2C6 0 6 4 5 8s-2 6-4 5M2 6h6" fill="none" stroke="#40526f" stroke-width="1.700"/><path d="M8 7l6 6M14 7l-6 6" stroke="#40526f" stroke-width="1.500"/>`)}</button>
            </div>
            <input class="formula" aria-label="Formula Bar" value="=OFFSET($A$1,MATCH(G6,B:B," />
            <button class="expand" aria-label="Expand Formula Bar">${icon(10, 11, svg`<path d="M1 1l4 3.500L9 1M1 6l4 3.500L9 6" fill="none" stroke="#1f2c44" stroke-width="2"/>`)}</button>
          </div>
          <div class="gap"></div>
          <excel-sheet></excel-sheet>
          <div class="sheets">
            <div class="nav">
              <button aria-label="First sheet">${arrow("M1 1h1.500v7H1zM9 1v7L4 4.500z")}</button>
              <button aria-label="Previous sheet">${arrow("M7 1v7L2 4.500z")}</button>
              <button aria-label="Next sheet">${arrow("M3 1v7l5-3.500z")}</button>
              <button aria-label="Last sheet">${arrow("M1 1v7l5-3.500zM7.500 1H9v7H7.500z")}</button>
            </div>
            ${["Index", "Offset", "Indirect", "1", "2", "3", "4", "5"].map((s, i) => html`
              <button class=${classMap({ sheet: true, first: i === 0, sel: i === 1, num: i > 2 })}>${s}</button>`)}
            <button class="sheet new" aria-label="Insert Worksheet">${icon(20, 13, svg`<path d="M7 4h10v6l-2 2H7z" fill="#eef4fd" stroke="#7286a8"/><path d="M4 1v7M1 4.500h7M2 2l4 5M6 2L2 7" stroke="#e0a43a" stroke-width="1.300"/>`)}</button>
            <div class="hbar">
              <div class="hsplit"></div>
              <button class="harr" aria-label="Scroll left">${arrow("M7 0v9L2 4.500z")}</button>
              <div class="hthumb">${icon(11, 7, svg`<path d="M1 0v7M4 0v7M7 0v7M10 0v7" stroke="#7f8ea8"/>`)}</div>
              <div class="htrack"></div>
              <button class="harr" aria-label="Scroll right">${arrow("M3 0v9l5-4.500z")}</button>
              <div class="hsplit"></div>
              ${icon(25, 1, nothing)}
            </div>
          </div>
          <footer class="status">
            <div class="mode">Enter</div>
            <div class="tools">
              <div class="views">
                ${icon(17, 12, svg`<path d="M.5 1.500h16v9H.5zM6 1v9M11 1v9M1 4.500h15M1 7.500h15" fill="#fff" stroke="#5b5f66"/>`)}
                ${icon(17, 12, svg`<path d="M.5.500h16v11H.5z" fill="#b5b8bd" stroke="#5b5f66"/><path d="M4.500 3h8v6h-8z" fill="#fff" stroke="#5b5f66"/>`)}
                ${icon(17, 12, svg`<path d="M.5.500h16v11H.5z" fill="#fff" stroke="#5b5f66"/><path d="M6 0v7h5V0M1 9h15" fill="none" stroke="#5b5f66" stroke-width="1.500"/>`)}
              </div>
              <div class="zoom">100%</div>
              <button aria-label="Zoom out">${round("M6 8h8")}</button>
              <input class="slider" type="range" aria-label="Zoom" value="50" />
              <button aria-label="Zoom in">${round("M6 8h8M10 4v8")}</button>
            </div>
          </footer>
          ${icon(15, 20, svg`<path d="M3 1h9M3 1.500l4.500 3 4.500-3M6 4v9H2l5.500 6L13 13H9V4z" fill="#fff" stroke="#3f4650" stroke-width="1.300"/>`, "cursor")}
        </div>
        <win-taskbar></win-taskbar>
      </div>
    `;
  }
}
